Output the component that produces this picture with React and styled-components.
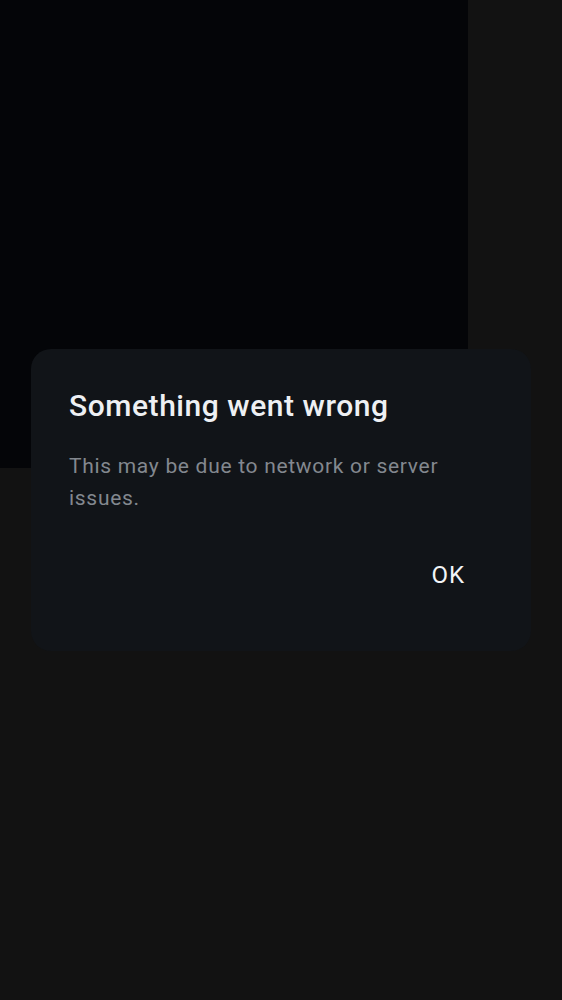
import React from "react";
import styled, { createGlobalStyle } from "styled-components";

const GlobalStyle = createGlobalStyle`
    html, body {
        margin: 0;
        padding: 0;
        background: #121212;
    }
    body {
        font-family: Roboto, "Noto Sans", sans-serif;
    }
`;

export default function App() {
    return (
        <Screen>
            <GlobalStyle />
            <VideoArea />
            <Backdrop>
                <Dialog role="alertdialog">
                    <Title>Something went wrong</Title>
                    <Message>
                        This may be due to network or server issues.
                    </Message>
                    <Actions>
                        <TextButton>OK</TextButton>
                    </Actions>
                </Dialog>
            </Backdrop>
        </Screen>
    );
}

const Screen = styled.div`
    position: relative;
    width: 562px;
    height: 1000px;
    overflow: hidden;
    background: #121212;
`;

const VideoArea = styled.div`
    width: 468px;
    height: 468px;
    background: #040508;
`;

const Backdrop = styled.div`
    position: absolute;
    inset: 0;
    display: flex;
    align-items: center;
    justify-content: center;
`;

const Dialog = styled.div`
    box-sizing: border-box;
    width: 500px;
    height: 302px;
    padding: 39px 38px 52px 38px;
    border-radius: 20px;
    background: #111418;
    display: flex;
    flex-direction: column;
`;

const Title = styled.div`
    font-size: 30px;
    line-height: 36px;
    font-weight: 500;
    letter-spacing: 0.55px;
    color: #eef0f3;
`;

const Message = styled.div`
    margin-top: 26px;
    font-size: 21px;
    line-height: 32px;
    letter-spacing: 0.7px;
    color: #83888f;
`;

const Actions = styled.div`
    margin-top: auto;
    display: flex;
    justify-content: flex-end;
    margin-right: 8px;
`;

const TextButton = styled.button`
    border: none;
    background: transparent;
    padding: 12px 20px;
    font-family: inherit;
    font-size: 24px;
    line-height: 24px;
    font-weight: 400;
    letter-spacing: 1px;
    color: #f2f4f7;
    cursor: pointer;
`;
